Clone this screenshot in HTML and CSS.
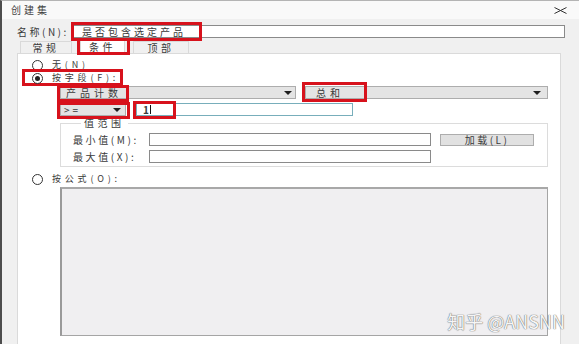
FILE: index.html
```html
<!DOCTYPE html>
<html lang="zh-CN">
<head>
<meta charset="utf-8">
<title>创建集</title>
<link rel="stylesheet" href="styles.css">
</head>
<body>
<div class="win">
  <div class="titlebar">
    <span class="title">创建集</span>
    <svg class="close" width="13" height="7" viewBox="0 0 13 7"><path d="M0.5 0.5 L12.5 6.5 M12.5 0.5 L0.5 6.5" stroke="#333" stroke-width="1" fill="none"/></svg>
  </div>
  <div class="main">
    <div class="name-row">
      <span class="name-label">名称(N):</span>
      <div class="field name-field"><span class="mark mark-name"></span>是否包含选定产品</div>
    </div>
    <div class="tabs">
      <div class="tab tab-general">常规</div>
      <div class="tab tab-cond active">条件<span class="mark mark-tab"></span></div>
      <div class="tab tab-top">顶部</div>
    </div>
    <div class="panel">
      <div class="radio-row">
        <span class="radio"></span><span class="rlabel">无(N)</span>
      </div>
      <div class="radio-row by-field">
        <span class="mark mark-field"></span>
        <span class="radio on"></span><span class="rlabel">按字段(F):</span>
      </div>
      <div class="select-row">
        <div class="select sel-field"><span class="mark mark-sel1"></span><span>产品计数</span><span class="arrow"></span></div>
        <div class="select sel-agg"><span class="mark mark-sel2"></span><span>总和</span><span class="arrow"></span></div>
      </div>
      <div class="cond-row">
        <div class="select sel-op"><span class="mark mark-op"></span><span>&gt;=</span><span class="arrow"></span></div>
        <div class="field val-field"><span class="mark mark-val"></span>1<span class="caret"></span></div>
      </div>
      <fieldset class="range">
        <legend>值范围</legend>
        <div class="range-row">
          <span class="range-label">最小值(M):</span>
          <div class="field range-field"></div>
          <div class="btn">加载(L)</div>
        </div>
        <div class="range-row second">
          <span class="range-label">最大值(X):</span>
          <div class="field range-field"></div>
        </div>
      </fieldset>
      <div class="radio-row formula">
        <span class="radio"></span><span class="rlabel">按公式(O):</span>
      </div>
      <div class="formula-box"></div>
    </div>
  </div>
  <div class="watermark">知乎 @ANSNN</div>
</div>
</body>
</html>
```
FILE: styles.css
```css
* { box-sizing: border-box; }

body {
  margin: 0;
  width: 579px;
  height: 344px;
  overflow: hidden;
  background: #f0f0f0;
  font-family: "Noto Sans CJK SC", "Noto Sans", sans-serif;
  font-size: 10px;
  line-height: 12px;
  color: #3a3a3a;
}

.win {
  position: relative;
  height: 344px;
  border-left: 2px solid #4d4d4d;
  border-top: 1px solid #b4b4b4;
  background: #eeeeee;
  display: flex;
  flex-direction: column;
}

.titlebar {
  height: 18px;
  background: #f9f9f9;
  display: flex;
  align-items: center;
  justify-content: space-between;
  padding: 0 12px 0 9px;
  flex-shrink: 0;
}

.title {
  letter-spacing: 3px;
  color: #444;
}

.main {
  flex: 1;
  display: flex;
  flex-direction: column;
  padding-left: 15px;
  background: #f0f0f0;
}

.mark {
  position: absolute;
  border: 3px solid #d7121c;
  pointer-events: none;
}

.name-row {
  height: 22px;
  display: flex;
  align-items: flex-start;
  padding-top: 6px;
}

.name-label {
  width: 56px;
  letter-spacing: 2.5px;
  padding-top: 1px;
}

.field {
  position: relative;
  background: #fff;
  border: 1px solid #8a8a8a;
  height: 13px;
}

.name-field {
  width: 492px;
  padding-left: 8px;
  letter-spacing: 3px;
  line-height: 11px;
}

.mark-name { left: -3px; top: -4px; width: 131px; height: 19px; }

.tabs {
  height: 12px;
  display: flex;
  padding-left: 3px;
  align-items: flex-end;
}

.tab {
  position: relative;
  height: 12px;
  background: #f0f0f0;
  border: 1px solid #d9d9d9;
  border-bottom: none;
  text-align: center;
  letter-spacing: 3.5px;
  line-height: 11px;
}

.tab-general { width: 52px; }
.tab-cond { width: 45px; margin-left: 8px; background: #fff; height: 13px; z-index: 1; }
.tab-top { width: 56px; margin-left: 8px; }

.mark-tab { left: -4px; top: -3px; width: 53px; height: 17px; }

.panel {
  position: relative;
  flex: 1;
  width: 544px;
  background: #fff;
  border: 1px solid #dadada;
  border-bottom: none;
  padding-top: 5px;
  display: flex;
  flex-direction: column;
}

.radio-row {
  position: relative;
  height: 12px;
  display: flex;
  align-items: center;
  gap: 9px;
  padding-left: 14px;
}

.radio-row.by-field { margin-top: 1px; }

.radio {
  position: relative;
  width: 11px;
  height: 11px;
  border: 1px solid #333;
  border-radius: 50%;
  background: #fff;
  flex-shrink: 0;
}

.radio.on::after {
  content: "";
  position: absolute;
  left: 2px;
  top: 2px;
  width: 5px;
  height: 5px;
  border-radius: 50%;
  background: #222;
}

.rlabel { font-size: 9px; letter-spacing: 3.8px; line-height: 12px; }

.mark-field { left: 4px; top: -3px; width: 101px; height: 17px; }

.select-row {
  margin-top: 2px;
  height: 13px;
  display: flex;
  gap: 9px;
  padding-left: 42px;
}

.select {
  position: relative;
  height: 13px;
  background: #e4e4e4;
  border: 1px solid #adadad;
  display: flex;
  align-items: center;
  justify-content: space-between;
  letter-spacing: 4px;
  line-height: 11px;
}

.arrow {
  width: 0;
  height: 0;
  border-left: 4px solid transparent;
  border-right: 4px solid transparent;
  border-top: 4px solid #1e1e1e;
}

.sel-field { width: 236px; padding: 0 3px 0 5px; }
.sel-agg { width: 243px; padding: 0 6px 0 10px; }

.mark-sel1 { left: -4px; top: -2px; width: 72px; height: 17px; }
.mark-sel2 { left: -4px; top: -5px; width: 65px; height: 20px; }

.cond-row {
  margin-top: 4px;
  height: 13px;
  display: flex;
  align-items: center;
  padding-left: 42px;
}

.sel-op { width: 66px; height: 12px; padding: 0 4px 0 3px; letter-spacing: 3px; }
.mark-op { left: -4px; top: -3px; width: 73px; height: 17px; }

.val-field {
  margin-left: 10px;
  width: 217px;
  border-color: #78aebb;
  padding-left: 6px;
  line-height: 11px;
  font-weight: bold;
  display: flex;
  align-items: center;
}

.caret {
  width: 1px;
  height: 9px;
  background: #111;
  margin-left: 1px;
}

.mark-val { left: -4px; top: -3px; width: 43px; height: 18px; }

.range {
  margin: 1px 0 0 42px;
  width: 488px;
  padding: 4px 0 3px 12px;
  border: 1px solid #dcdcdc;
}

.range legend {
  padding: 0 3px;
  margin-left: 8px;
  letter-spacing: 3.5px;
  line-height: 12px;
}

.range-row {
  display: flex;
  align-items: center;
  height: 13px;
}

.range-row.second { margin-top: 4px; }

.range-label {
  width: 76px;
  letter-spacing: 2.6px;
}

.range-field { width: 282px; }

.btn {
  margin-left: 9px;
  width: 94px;
  height: 12px;
  background: #e1e1e1;
  border: 1px solid #adadad;
  text-align: center;
  line-height: 10px;
  letter-spacing: 2.5px;
}

.radio-row.formula { margin-top: 6px; }

.formula-box {
  margin: 2px 0 0 42px;
  width: 488px;
  height: 149px;
  background: #f0eff1;
  border: 1px solid #a5a5a5;
  border-left: 2px solid #9a9a9a;
  border-top: 2px solid #a8a8a8;
}

.watermark {
  position: absolute;
  right: 14px;
  bottom: 12px;
  font-size: 18px;
  line-height: 22px;
  color: #f6f6f6;
  text-shadow: 0 0 1px #6a6a6a, 0 0 1px #6a6a6a;
  letter-spacing: 0;
}
```
